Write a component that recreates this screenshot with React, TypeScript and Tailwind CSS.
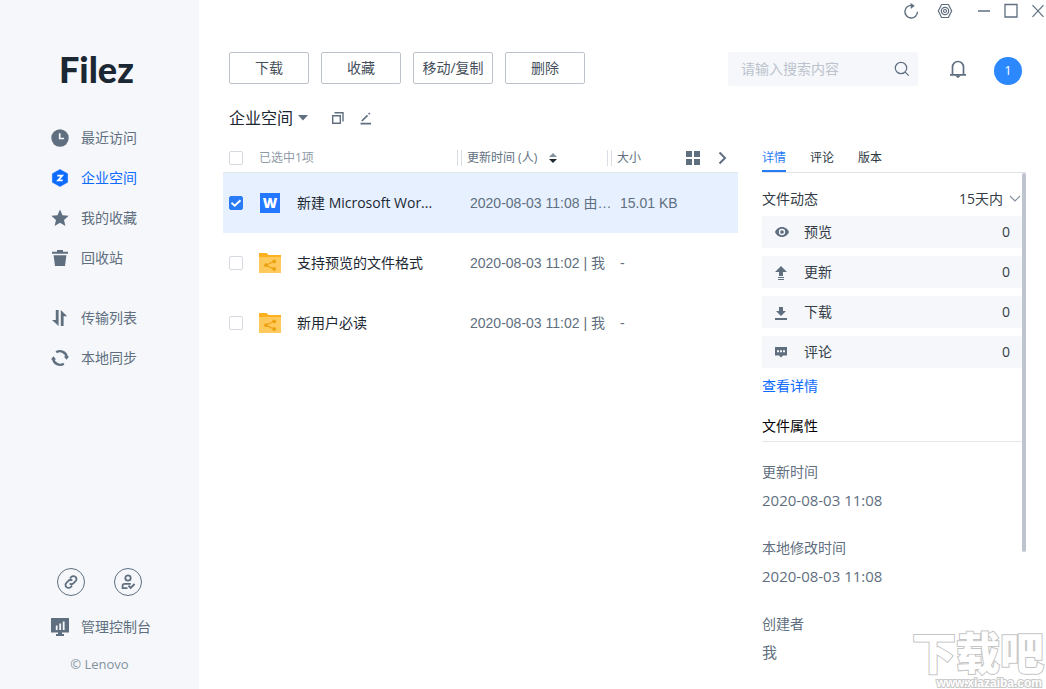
import type { ReactNode } from "react";
import clsx from "clsx";

type IconProps = { className?: string };

type NavItem = {
  label: string;
  icon: ReactNode;
  active?: boolean;
};

type FileRow = {
  id: string;
  name: string;
  kind: "word" | "folder";
  updated: string;
  size: string;
  selected?: boolean;
};

function ClockIcon() {
  return (
    <svg viewBox="0 0 18 18" className="size-[18px]" fill="currentColor">
      <circle cx="9" cy="9" r="8.7" />
      <path d="M8.7 4.2v5.3h4.4" fill="none" stroke="#f5f7fa" strokeWidth="1.7" />
    </svg>
  );
}

function SpaceIcon() {
  return (
    <svg viewBox="0 0 18 18" className="size-[18px]" fill="currentColor">
      <path d="M9 .5 16.600 4.700v8.600L9 17.500 1.400 13.300V4.700z" stroke="currentColor" strokeWidth=".6" strokeLinejoin="round" />
      <path d="M6.300 6.700h4.900L7 11.400h4.700" fill="none" stroke="#fff" strokeWidth="1.700" />
    </svg>
  );
}

function StarIcon() {
  return (
    <svg viewBox="0 0 18 18" className="size-[18px]" fill="currentColor">
      <path d="m9 .5 2.500 5.700 6.200.6-4.700 4.100 1.400 6.100L9 13.800 3.600 17 5 10.900.3 6.800l6.200-.6z" />
    </svg>
  );
}

function TrashIcon() {
  return (
    <svg viewBox="0 0 18 18" className="size-[18px]" fill="currentColor">
      <path d="M1 2.800h5V1h6v1.800h5v2H1zM2.600 6.300h12.800L14 17H4z" />
    </svg>
  );
}

function TransferIcon() {
  return (
    <svg viewBox="0 0 18 18" className="size-[18px]" fill="currentColor">
      <path d="M7.600 1v16L1 11h3.800V1zM9.800 1l6.400 6.200h-3.600V17H9.800z" />
    </svg>
  );
}

function SyncIcon() {
  return (
    <svg viewBox="0 0 18 18" className="size-[18px]" fill="none" stroke="currentColor" strokeWidth="2.400">
      <path d="M5.200 3.300A6.900 6.900 0 0 1 15.800 8.200M12.800 14.700A6.900 6.900 0 0 1 2.200 9.800" />
      <path d="M12.800 7.600h5.200l-2.400 3.200zM0 10.400h5.200L2.400 7.200z" fill="currentColor" stroke="none" />
    </svg>
  );
}

function ConsoleIcon() {
  return (
    <svg viewBox="0 0 18 18" className="size-[18px]" fill="currentColor">
      <path d="M0 0h18v14.500h-7V16h2v2H5v-2h2v-1.500H0z" />
      <path d="M5.700 7.500V12M9.200 5.500V12M12.700 3.500V12" stroke="#f5f7fa" strokeWidth="1.800" />
    </svg>
  );
}

function LinkIcon() {
  return (
    <svg viewBox="0 0 16 16" className="size-4" fill="none" stroke="currentColor" strokeWidth="1.800">
      <path d="M7 4.300l1.300-1.300a2.900 2.900 0 0 1 4.300 0 2.900 2.900 0 0 1 0 4.200l-2 2a2.800 2.800 0 0 1-3.900.1" />
      <path d="M9 11.700l-1.300 1.300a2.900 2.900 0 0 1-4.300 0 2.900 2.900 0 0 1 0-4.200l2-2a2.800 2.800 0 0 1 3.900-.1" />
    </svg>
  );
}

function UserCheckIcon() {
  return (
    <svg viewBox="0 0 16 16" className="size-4" fill="none" stroke="currentColor" strokeWidth="1.800">
      <circle cx="8" cy="4" r="2.700" />
      <path d="M7.500 14.100H2.600v-2.300q0-2 2-2h6.200M8.400 11.700l2.200 2.200 4-3.900" />
    </svg>
  );
}

function FolderIcon() {
  return (
    <svg viewBox="0 0 22 20" className="h-5 w-[22px]">
      <path d="M0 0h7.500l2 2H22v4H0z" fill="#ffb01f" />
      <path d="M0 4h22v16H0z" fill="#ffc95c" />
      <path d="M15.200 8.300 7 12.200l8.200 3.900" fill="none" stroke="#eda311" strokeWidth="1.200" />
      <g fill="#eda311">
        <circle cx="15.200" cy="8.400" r="1.900" />
        <circle cx="7" cy="12.200" r="1.900" />
        <circle cx="15.200" cy="16" r="1.900" />
      </g>
    </svg>
  );
}

function WordIcon() {
  return (
    <span className="ml-px flex size-5 items-center justify-center bg-[#2478ff] font-['Open_Sans',sans-serif] text-sm font-extrabold text-white">
      W
    </span>
  );
}

function EyeIcon() {
  return (
    <svg viewBox="0 0 14 14" className="size-3.5" fill="currentColor">
      <path d="M7 2C3.500 2 1 4.500 0 7c1 2.500 3.500 5 7 5s6-2.500 7-5c-1-2.500-3.500-5-7-5z" />
      <circle cx="7" cy="7" r="2.500" fill="none" stroke="#f5f7fa" strokeWidth="1.300" />
    </svg>
  );
}

function UploadIcon() {
  return (
    <svg viewBox="0 0 14 16" className="h-4 w-3.5" fill="currentColor">
      <path d="m6 2 6 6H8v4H4V8H0zM3 13h6v1H3zM3 15h6v1H3z" />
    </svg>
  );
}

function DownloadIcon() {
  return (
    <svg viewBox="0 0 14 16" className="h-4 w-3.5" fill="currentColor">
      <path d="M4 3h4v4h3l-5 5-5-5h3zM0 14h12v2H0z" />
    </svg>
  );
}

function CommentIcon() {
  return (
    <svg viewBox="0 0 14 14" className="size-3.5" fill="currentColor">
      <path d="M0 2h12v8.500H8L6 12.500l-2-2H0z" />
      <path d="M2 5.200h2v2H2zM5 5.200h2v2H5zM8 5.200h2v2H8z" fill="#f5f7fa" />
    </svg>
  );
}

function SearchIcon({ className }: IconProps) {
  return (
    <svg viewBox="0 0 16 16" className={className} fill="none" stroke="currentColor" strokeWidth="1.200">
      <circle cx="7" cy="7" r="5.700" />
      <path d="m11.200 11.200 3.500 3.500" />
    </svg>
  );
}

const mainNav: NavItem[] = [
  { label: "最近访问", icon: <ClockIcon /> },
  { label: "企业空间", icon: <SpaceIcon />, active: true },
  { label: "我的收藏", icon: <StarIcon /> },
  { label: "回收站", icon: <TrashIcon /> },
];

const syncNav: NavItem[] = [
  { label: "传输列表", icon: <TransferIcon /> },
  { label: "本地同步", icon: <SyncIcon /> },
];

const actions = ["下载", "收藏", "移动/复制", "删除"];

const files: FileRow[] = [
  {
    id: "word",
    name: "新建 Microsoft Wor...",
    kind: "word",
    updated: "2020-08-03 11:08 由…",
    size: "15.01 KB",
    selected: true,
  },
  { id: "formats", name: "支持预览的文件格式", kind: "folder", updated: "2020-08-03 11:02 | 我", size: "-" },
  { id: "guide", name: "新用户必读", kind: "folder", updated: "2020-08-03 11:02 | 我", size: "-" },
];

const activity = [
  { label: "预览", count: 0, icon: <EyeIcon /> },
  { label: "更新", count: 0, icon: <UploadIcon /> },
  { label: "下载", count: 0, icon: <DownloadIcon /> },
  { label: "评论", count: 0, icon: <CommentIcon /> },
];

const properties = [
  { label: "更新时间", value: "2020-08-03 11:08" },
  { label: "本地修改时间", value: "2020-08-03 11:08" },
  { label: "创建者", value: "我" },
];

function NavLink({ item }: { item: NavItem }) {
  return (
    <li>
      <a
        href="#"
        className={clsx(
          "flex h-10 items-center gap-3 pl-[51px] text-sm",
          item.active ? "text-[#0d6bff]" : "text-[#5f6f80]",
        )}
      >
        {item.icon}
        {item.label}
      </a>
    </li>
  );
}

function Sidebar() {
  return (
    <aside className="flex w-[199px] shrink-0 flex-col bg-[#f5f7fa]">
      <h1 className="mt-[49px] pl-[59px] font-['Lato',sans-serif] text-[36px] leading-10 font-black text-[#1b2733]">
        Filez
      </h1>
      <nav className="mt-[29px] flex flex-col gap-5">
        <ul>
          {mainNav.map((item) => (
            <NavLink key={item.label} item={item} />
          ))}
        </ul>
        <ul>
          {syncNav.map((item) => (
            <NavLink key={item.label} item={item} />
          ))}
        </ul>
      </nav>
      <div className="mt-auto pb-[15px] text-[#5f6f80]">
        <div className="mb-[11px] flex gap-[29px] pl-[57px]">
          <button type="button" aria-label="链接" className="flex size-7 items-center justify-center rounded-full border border-[#5f6f80]">
            <LinkIcon />
          </button>
          <button type="button" aria-label="用户" className="flex size-7 items-center justify-center rounded-full border border-[#5f6f80]">
            <UserCheckIcon />
          </button>
        </div>
        <a href="#" className="flex h-10 items-center gap-3 pl-[51px] text-sm">
          <ConsoleIcon />
          管理控制台
        </a>
        <p className="mt-[7px] text-center text-[13px] leading-5 text-[#8492a0]">© Lenovo</p>
      </div>
    </aside>
  );
}

function WindowControls() {
  return (
    <div className="flex h-[22px] items-center justify-end text-[#5f6f80]">
      <button type="button" aria-label="刷新">
        <svg viewBox="0 0 16 16" className="size-4" fill="none" stroke="currentColor" strokeWidth="1.400">
          <path d="M9 2.400a6.300 6.300 0 1 0 5.500 6.300" />
          <path d="M7.500 0 11.800 2.800 7.800 6z" fill="currentColor" stroke="none" />
        </svg>
      </button>
      <button type="button" aria-label="设置" className="ml-[18px]">
        <svg viewBox="0 0 16 16" className="size-4" fill="none" stroke="currentColor" strokeWidth="1.200">
          <path d="M4.600 1.500h6.800L14.700 8l-3.300 6.500H4.600L1.300 8z" strokeLinejoin="round" />
          <circle cx="8" cy="8" r="3.700" />
          <circle cx="8" cy="8" r="1.500" />
        </svg>
      </button>
      <button type="button" aria-label="最小化" className="ml-[23px]">
        <svg viewBox="0 0 16 16" className="size-4" stroke="currentColor" strokeWidth="1.500">
          <path d="M2 8h12" />
        </svg>
      </button>
      <button type="button" aria-label="最大化" className="ml-[11px]">
        <svg viewBox="0 0 16 16" className="size-4" fill="none" stroke="currentColor" strokeWidth="1.300">
          <path d="M2 1.500h12v12.500H2z" />
        </svg>
      </button>
      <button type="button" aria-label="关闭" className="ml-[11px]">
        <svg viewBox="0 0 16 16" className="size-4" stroke="currentColor" strokeWidth="1.200">
          <path d="m2.500 2.200 11 11.600M13.500 2.200l-11 11.600" />
        </svg>
      </button>
    </div>
  );
}

function Toolbar() {
  return (
    <header className="mt-[30px] flex items-start pr-6 pl-[30px]">
      <div className="flex gap-3">
        {actions.map((action) => (
          <button
            key={action}
            type="button"
            className="h-8 w-20 rounded-xs border border-[#bcc3cc] text-sm whitespace-nowrap text-[#454f5b]"
          >
            {action}
          </button>
        ))}
      </div>
      <label className="ml-auto flex h-[34px] w-[190px] items-center rounded-xs bg-[#f5f7fb] pr-2 pl-[13px] text-[#5f6f80]">
        <input
          type="search"
          aria-label="搜索"
          placeholder="请输入搜索内容"
          className="w-0 flex-1 bg-transparent text-sm outline-none placeholder:text-[#bcc3cc]"
        />
        <SearchIcon className="size-4" />
      </label>
      <button type="button" aria-label="通知" className="mt-2 ml-8 text-[#5f6f80]">
        <svg viewBox="0 0 16 18" className="h-[18px] w-4" fill="none" stroke="currentColor" strokeWidth="1.700">
          <path d="M2.500 14.700V7a5.500 5.500 0 0 1 11 0v7.700M0 14.800h16" />
          <path d="M5 15.500h6L8 18.200z" fill="currentColor" stroke="none" />
        </svg>
      </button>
      <button type="button" className="mt-[5px] ml-7 size-7 rounded-full bg-[#2b88ff] text-[13px] text-white">
        1
      </button>
    </header>
  );
}

function Breadcrumb() {
  return (
    <div className="mt-5 flex h-6 items-center pl-[30px] text-[#5f6f80]">
      <button type="button" className="flex items-center gap-[5px] text-base text-[#1b2733]">
        企业空间
        <svg viewBox="0 0 10 6" className="h-1.5 w-2.5" fill="#5f6f80">
          <path d="M0 0h10L5 5.500z" />
        </svg>
      </button>
      <button type="button" aria-label="复制" className="ml-[23px]">
        <svg viewBox="0 0 14 14" className="size-3.5" fill="none" stroke="currentColor" strokeWidth="1.400">
          <path d="M1.700 4.700h7.600v7.600H1.700z" />
          <path d="M3.500 1.800H12v8.700" />
        </svg>
      </button>
      <button type="button" aria-label="重命名" className="ml-3.5">
        <svg viewBox="0 0 14 14" className="size-3.5" stroke="currentColor" strokeWidth="1.700">
          <path d="M1.500 12.600H12M2.800 10 8.500 4.300M9.600 3.200l1.200-1.200" />
        </svg>
      </button>
    </div>
  );
}

function Checkbox({ label, checked }: { label: string; checked?: boolean }) {
  return (
    <span className="relative ml-1.5 block size-3.5">
      <input
        type="checkbox"
        aria-label={label}
        defaultChecked={checked}
        className="peer block size-3.5 appearance-none rounded-xs border border-[#d5dae0] bg-white checked:border-[#2a7cf6] checked:bg-[#2a7cf6]"
      />
      <svg
        viewBox="0 0 14 14"
        className="pointer-events-none absolute inset-0 hidden size-3.5 peer-checked:block"
        fill="none"
        stroke="#fff"
        strokeWidth="1.900"
      >
        <path d="m2.500 6.800 3.200 3 5.800-5.600" />
      </svg>
    </span>
  );
}

function ColumnHandle() {
  return <span className="h-4 w-[5px] border-x border-[#d8dde6]" />;
}

function FileTable() {
  return (
    <div className="min-w-0 flex-1">
      <table className="w-full table-fixed border-separate border-spacing-0 text-left">
        <colgroup>
          <col className="w-9" />
          <col className="w-[38px]" />
          <col />
          <col className="w-[150px]" />
          <col className="w-[79px]" />
          <col className="w-[52px]" />
        </colgroup>
        <thead className="text-xs text-[#5f6f80]">
          <tr className="h-[30px] *:border-b *:border-[#e3e6ea]">
            <th>
              <Checkbox label="全选" />
            </th>
            <th colSpan={2} className="font-normal text-[#8f9aa6]">
              已选中1项
            </th>
            <th className="font-normal">
              <div className="flex items-center gap-[5px]">
                <ColumnHandle />
                <button type="button" className="flex items-center gap-3">
                  更新时间 (人)
                  <svg viewBox="0 0 8 10" className="h-2.5 w-2">
                    <path d="M0 4h8L4 0z" fill="#8492a0" />
                    <path d="M0 6h8l-4 4z" fill="#1b2733" />
                  </svg>
                </button>
              </div>
            </th>
            <th className="font-normal">
              <div className="flex items-center gap-[5px]">
                <ColumnHandle />
                大小
              </div>
            </th>
            <th>
              <div className="flex items-center gap-4">
                <button type="button" aria-label="网格视图">
                  <svg viewBox="0 0 14 14" className="size-3.5" fill="currentColor">
                    <path d="M0 0h6v6H0zM8 0h6v6H8zM0 8h6v6H0zM8 8h6v6H8z" />
                  </svg>
                </button>
                <button type="button" aria-label="收起详情">
                  <svg viewBox="0 0 12 14" className="h-3.5 w-3" fill="none" stroke="currentColor" strokeWidth="2">
                    <path d="m3.500 1.500 5.500 5.500-5.500 5.500" />
                  </svg>
                </button>
              </div>
            </th>
          </tr>
        </thead>
        <tbody className="text-sm">
          {files.map((file) => (
            <tr key={file.id} className={clsx("h-[60px]", file.selected && "bg-[#e6f0ff]")}>
              <td>
                <Checkbox label={file.name} checked={file.selected} />
              </td>
              <td>{file.kind === "word" ? <WordIcon /> : <FolderIcon />}</td>
              <td className="truncate text-[#1b2733]">{file.name}</td>
              <td className="pl-[13px] font-['Liberation_Sans','Noto_Sans_CJK_SC',sans-serif] whitespace-nowrap text-[#5f6f80]">
                {file.updated}
              </td>
              <td colSpan={2} className="pl-[13px] font-['Liberation_Sans',sans-serif] text-[#5f6f80]">
                {file.size}
              </td>
            </tr>
          ))}
        </tbody>
      </table>
    </div>
  );
}

function DetailPanel() {
  return (
    <section className="w-[264px] shrink-0">
      <div className="flex h-[30px] gap-6 border-b border-[#dfe3e8] text-xs text-[#2b3642]">
        <button type="button" className="border-b-2 border-[#2a7cf6] pt-0.5 text-[#2a7cf6]">
          详情
        </button>
        <button type="button">评论</button>
        <button type="button">版本</button>
      </div>
      <div className="flex">
        <div className="min-w-0 flex-1 pt-2 text-sm">
          <div className="flex h-[35px] items-center justify-between text-[#333c47]">
            <h2>文件动态</h2>
            <div className="relative">
              <select aria-label="时间范围" className="w-[63px] appearance-none bg-transparent outline-none">
                <option>15天内</option>
              </select>
              <svg
                viewBox="0 0 12 8"
                className="pointer-events-none absolute top-1.5 right-px h-2 w-3"
                fill="none"
                stroke="#8492a0"
                strokeWidth="1.200"
              >
                <path d="m1 1 5 5 5-5" />
              </svg>
            </div>
          </div>
          <ul className="flex flex-col gap-2">
            {activity.map((item) => (
              <li
                key={item.label}
                className="flex h-8 items-center rounded-xs bg-[#f5f7fa] pr-3 pl-[13px] text-[#333c47]"
              >
                <span className="text-[#5f6f80]">{item.icon}</span>
                <span className="ml-[15px]">{item.label}</span>
                <span className="ml-auto">{item.count}</span>
              </li>
            ))}
          </ul>
          <a href="#" className="flex h-9 w-fit items-center text-[#0d6bff]">
            查看详情
          </a>
          <h2 className="border-b border-[#e3e6ea] pt-3 pb-[5px] text-black">文件属性</h2>
          <dl className="flex flex-col gap-7 pt-5 leading-5 text-[#5f6f80]">
            {properties.map((prop) => (
              <div key={prop.label} className="flex flex-col gap-2">
                <dt>{prop.label}</dt>
                <dd className="text-[15px]">{prop.value}</dd>
              </div>
            ))}
          </dl>
        </div>
        {/* scrollbar thumb */}
        <div className="h-[379px] w-1 rounded-full bg-[#bfc5ce]" />
      </div>
    </section>
  );
}

function Watermark() {
  return (
    <div className="pointer-events-none absolute right-0 bottom-0 text-right whitespace-nowrap text-white select-none">
      <p className="mb-1 pr-0.5 font-['Noto_Sans_CJK_SC',sans-serif] text-[44px] leading-[44px] font-black [-webkit-text-stroke:2px_#c4c4c4] [paint-order:stroke_fill]">
        下载吧
      </p>
      <p className="pr-1 font-['Liberation_Sans',sans-serif] text-xs leading-3 font-bold [-webkit-text-stroke:2px_#c9c9c9] [paint-order:stroke_fill]">
        www.xiazaiba.com
      </p>
    </div>
  );
}

export default function App() {
  return (
    <div className="relative flex h-screen overflow-hidden bg-white font-['Open_Sans','Noto_Sans_CJK_SC',sans-serif]">
      <Sidebar />
      <main className="flex min-w-0 flex-1 flex-col">
        <WindowControls />
        <Toolbar />
        <Breadcrumb />
        <div className="mt-[13px] flex min-h-0 flex-1 gap-6 pr-5 pl-6">
          <FileTable />
          <DetailPanel />
        </div>
      </main>
      <Watermark />
    </div>
  );
}
